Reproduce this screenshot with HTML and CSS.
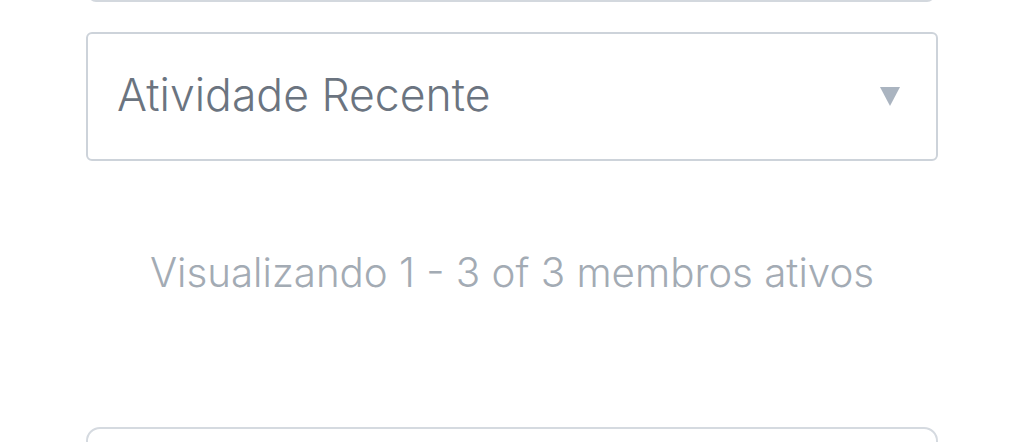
FILE: index.html
```html
<!DOCTYPE html>
<html>
<head>
<meta charset="utf-8">
<link rel="stylesheet" href="styles.css">
</head>
<body>
<div class="page">
  <div class="prev-box"></div>
  <div class="select">
    <span class="select-label">Atividade Recente</span>
    <span class="caret"></span>
  </div>
  <p class="count">Visualizando 1 - 3 of 3 membros ativos</p>
  <div class="next-box"></div>
</div>
</body>
</html>
```
FILE: styles.css
```css
html, body {
  margin: 0;
  padding: 0;
  background: #ffffff;
  overflow: hidden;
}
.page {
  width: 852px;
  margin: 0 0 0 86px;
  display: flex;
  flex-direction: column;
  font-family: Inter, "Noto Sans", sans-serif;
  font-weight: 300;
}
.prev-box {
  height: 60px;
  margin-top: -58px;
  border: 2px solid #d3d8de;
  border-radius: 8px;
  box-sizing: border-box;
  margin-left: 2px;
  margin-right: 3px;
}
.select {
  margin-top: 30px;
  height: 129px;
  box-sizing: border-box;
  border: 2px solid #cdd3da;
  border-radius: 6px;
  display: flex;
  align-items: center;
  justify-content: space-between;
  padding: 0 36px 0 29px;
}
.select-label {
  font-size: 44.5px;
  color: #6b7480;
  line-height: 1;
  margin-top: -2px;
}
.caret {
  width: 0;
  height: 0;
  border-left: 10px solid transparent;
  border-right: 10px solid transparent;
  border-top: 19px solid #aab4c0;
}
.count {
  margin: 90px 0 0;
  text-align: center;
  font-size: 40.3px;
  line-height: 44px;
  color: #a3abb4;
}
.next-box {
  margin-top: 132px;
  height: 80px;
  border: 2px solid #d5dae0;
  border-radius: 14px;
  box-sizing: border-box;
}
```
